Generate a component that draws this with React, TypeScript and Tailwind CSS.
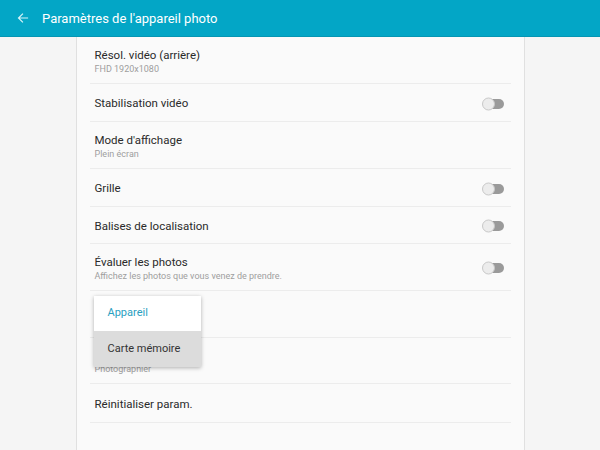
import React from 'react';

type Row = {
  title: string;
  sub?: string;
  toggle?: boolean;
  h: string;
};

const rows: Row[] = [
  {title: 'Résol. vidéo (arrière)', sub: 'FHD 1920x1080', h: 'h-[47px]'},
  {title: 'Stabilisation vidéo', toggle: true, h: 'h-[38px]'},
  {title: "Mode d'affichage", sub: 'Plein écran', h: 'h-[47px]'},
  {title: 'Grille', toggle: true, h: 'h-[38px]'},
  {title: 'Balises de localisation', toggle: true, h: 'h-[37px]'},
  {title: 'Évaluer les photos', sub: 'Affichez les photos que vous venez de prendre.', toggle: true, h: 'h-[47px]'},
  {title: 'Stockage', sub: 'Appareil', h: 'h-[47px]'},
  {title: 'Touche Volume', sub: 'Photographier', h: 'h-[46px]'},
  {title: 'Réinitialiser param.', h: 'h-[39px]'},
];

function Toggle() {
  return (
    <div className="relative h-[10px] w-[22px] mr-[7px]">
      <div className="absolute inset-y-0 right-0 left-[4px] rounded-full bg-[#9a9a9a]" />
      <div className="absolute left-0 top-1/2 h-[13px] w-[13px] -translate-y-1/2 rounded-full border border-[#c8c8c8] bg-[#ececec]" />
    </div>
  );
}

export default function App() {
  return (
    <div className="h-[450px] w-[600px] overflow-hidden bg-[#f5f5f5] font-['Roboto',sans-serif]">
      <header className="flex h-[37px] items-center border-b border-[#0596b3] bg-[#03a6c6] text-white">
        <svg className="ml-[17px] h-[12px] w-[12px]" viewBox="0 0 24 24" fill="none" stroke="#d6f3f8" strokeWidth="2.4" strokeLinecap="square">
          <path d="M21 12H4M11 4l-8 8 8 8" />
        </svg>
        <span className="ml-[13px] text-[13px] leading-none">Paramètres de l'appareil photo</span>
      </header>

      <main className="relative mx-auto h-[413px] w-[449px] border-x border-[#e0e0e0] bg-[#fafafa]">
        <div className="px-[13px]">
          {rows.map((r) => (
            <div key={r.title} className={`flex items-center justify-between border-b border-[#ececec] pl-[5px] pt-[2px] ${r.h}`}>
              <div className="flex flex-col">
                <span className="text-[11.5px] leading-[15px] text-[#2a2a2a]">{r.title}</span>
                {r.sub && <span className="text-[9px] leading-[12px] text-[#9e9e9e]">{r.sub}</span>}
              </div>
              {r.toggle && <Toggle />}
            </div>
          ))}
        </div>

        <div className="absolute left-[17px] top-[259px] w-[107px] bg-white shadow-[0_1px_4px_rgba(0,0,0,0.3)]">
          <div className="flex h-[35px] items-center pl-[14px] text-[11px] text-[#2aa0bf]">Appareil</div>
          <div className="flex h-[36px] items-center bg-[#dcdcdc] pl-[14px] text-[11px] text-[#333]">Carte mémoire</div>
        </div>
      </main>
    </div>
  );
}
